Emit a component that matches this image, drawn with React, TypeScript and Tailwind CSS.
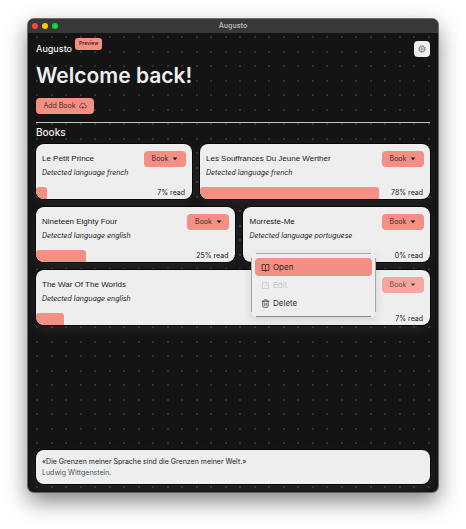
import { Trash2 } from "lucide-react";
import { RiBookOpenLine, RiEditBoxLine, RiUploadCloud2Line } from "react-icons/ri";

type Book = {
  title: string;
  language: string;
  progress: number;
  menuOpen?: boolean;
};

const rows: { columns: string; books: Book[] }[] = [
  {
    columns: "grid-cols-[156fr_230fr]",
    books: [
      { title: "Le Petit Prince", language: "french", progress: 7 },
      { title: "Les Souffrances Du Jeune Werther", language: "french", progress: 78 },
    ],
  },
  {
    columns: "grid-cols-[200fr_187fr]",
    books: [
      { title: "Nineteen Eighty Four", language: "english", progress: 25 },
      { title: "Morreste-Me", language: "portuguese", progress: 0 },
    ],
  },
  {
    columns: "grid-cols-1",
    books: [{ title: "The War Of The Worlds", language: "english", progress: 7, menuOpen: true }],
  },
];

function BookMenu() {
  const item = "flex h-[18px] w-full items-center gap-[3px] rounded-[4px] px-[6px] text-[8px] leading-none";
  return (
    <div
      role="menu"
      className="absolute right-full -top-6 z-10 mr-[6px] w-[125px] rounded-[5px] bg-[#eeeeee] px-1 pt-[5px] pb-[5px] shadow-[0_3px_8px_rgba(0,0,0,0.12)]"
    >
      <span className="absolute inset-x-[5px] top-0 h-px bg-[#aaaaaa]" />
      <span className="absolute inset-x-[5px] bottom-0 h-px bg-[#8c8c8c]" />
      <span className="absolute inset-y-[5px] left-0 w-px bg-[#a5a5a5]" />
      <span className="absolute inset-y-[5px] right-0 w-px bg-[#a5a5a5]" />
      <button role="menuitem" className={item + " bg-[#f38f83] text-[#332020]"}>
        <RiBookOpenLine className="size-[9px]" />
        Open
      </button>
      <button role="menuitem" disabled className={item + " text-[#c6cace]"}>
        <RiEditBoxLine className="size-[9px]" />
        Edit
      </button>
      <button role="menuitem" className={item + " text-[#333333]"}>
        <Trash2 className="size-[9px]" strokeWidth={2} />
        Delete
      </button>
    </div>
  );
}

function BookCard({ book }: { book: Book }) {
  return (
    <article className="relative flex h-[55px] flex-col rounded-[8px] bg-[#eeeeee] text-[#18181b] shadow-[0_0_0_1px_#080808,0_4px_14px_rgba(255,255,255,0.08)]">
      <div className="flex items-start justify-between px-[6px] pt-[7px]">
        <div>
          <h3 className="font-['Liberation_Sans',sans-serif] text-[8px] leading-[16px]">{book.title}</h3>
          <p className="text-[7px] leading-[12px] italic">Detected language {book.language}</p>
        </div>
        <div className="relative">
          <button
            className={
              "flex h-4 w-[42px] items-center justify-center gap-1 rounded-[4px] text-[7px] " +
              (book.menuOpen ? "bg-[#f3a79f] text-[#73504c]" : "bg-[#f38f83] text-[#4d2b28]")
            }
          >
            Book
            <svg viewBox="0 0 6 4" className="h-1 w-[6px]" fill={book.menuOpen ? "#5a3f3c" : "#201010"}>
              <path d="M.7.6h4.6L3 3.2z" />
            </svg>
          </button>
          {book.menuOpen && <BookMenu />}
        </div>
      </div>
      <div className="mt-auto flex h-3 items-center justify-end overflow-hidden rounded-b-[8px]">
        <div className="mr-auto h-3 rounded-t-[3px] bg-[#f38f83]" style={{ width: book.progress + "%" }} />
        <span className="mr-[7px] text-[7px] leading-[12px]">{book.progress}% read</span>
      </div>
    </article>
  );
}

export default function App() {
  return (
    <div className="flex min-h-screen flex-col bg-white px-7 pt-[19px] pb-[37px] font-[Inter,sans-serif]">
      <div className="flex flex-1 flex-col overflow-hidden rounded-[6px] bg-[#141414] shadow-[0_0_0_1px_rgba(80,80,80,0.8),0_9px_22px_rgba(0,0,0,0.5)]">
        <div className="relative flex h-[14px] items-center gap-1 bg-[#383838] px-1">
          <span className="size-[6px] rounded-full bg-[#ff4539]" />
          <span className="size-[6px] rounded-full bg-[#ffcb00]" />
          <span className="size-[6px] rounded-full bg-[#00dd3c]" />
          <span className="absolute inset-x-0 text-center text-[7px] font-semibold text-[#b5b5b5]">Augusto</span>
        </div>

        <main className="flex flex-1 flex-col bg-[radial-gradient(circle_at_4px_4px,#333333_0.7px,transparent_1px),radial-gradient(circle_at_19px_4px,#333333_0.7px,transparent_1px),radial-gradient(circle_at_4px_19px,#333333_0.7px,transparent_1px),radial-gradient(circle_at_19px_19px,#333333_0.7px,transparent_1px)] bg-[length:29px_29px] bg-[position:5px_0px] p-2">
          <header className="flex h-4 items-center text-[#eeeeee]">
            <span className="text-[9px] font-medium">Augusto</span>
            <span className="mb-[11px] ml-[3px] flex h-3 items-center rounded-[3px] bg-[#f38f83] px-1 text-[5px] font-semibold text-[#4d2222]">
              Preview
            </span>
            <button aria-label="Settings" className="ml-auto flex size-4 items-center justify-center rounded-[4px] bg-[#eeeeee] text-[#707070]">
              <svg viewBox="0 0 16 16" className="size-2" fill="none" stroke="currentColor">
                <circle cx="8" cy="8" r="5.6" strokeWidth="1.6" />
                <circle cx="8" cy="8" r="7" strokeWidth="1.6" strokeDasharray="2.2 3.3" />
                <circle cx="8" cy="8" r="2.4" strokeWidth="1.5" />
              </svg>
            </button>
          </header>
          <h1 className="mt-1 text-[21px] leading-[30px] font-semibold text-[#eeeeee]">Welcome back!</h1>
          <button className="mt-[7px] flex h-4 w-[58px] items-center justify-center gap-[3px] rounded-[4px] bg-[#f38f83] text-[7px] text-[#4d2b28]">
            Add Book
            <RiUploadCloud2Line className="size-2" />
          </button>
          <hr className="mt-2 border-[#c4c4c4]" />
          <h2 className="mt-px text-[10px] leading-[16px] font-medium text-[#eeeeee]">Books</h2>
          <div className="mt-1 flex flex-col gap-2">
            {rows.map((row) => (
              <section key={row.columns} className={"grid gap-2 " + row.columns}>
                {row.books.map((book) => (
                  <BookCard key={book.title} book={book} />
                ))}
              </section>
            ))}
          </div>
          <footer className="mt-auto rounded-[8px] bg-[#eeeeee] px-[6px] py-[6px] text-[7px] leading-[11px] shadow-[0_0_0_1px_#080808,0_4px_14px_rgba(255,255,255,0.08)]">
            <p className="text-[#202020]">«Die Grenzen meiner Sprache sind die Grenzen meiner Welt.»</p>
            <p className="text-[#4b5563]">Ludwig Wittgenstein.</p>
          </footer>
        </main>
      </div>
    </div>
  );
}
